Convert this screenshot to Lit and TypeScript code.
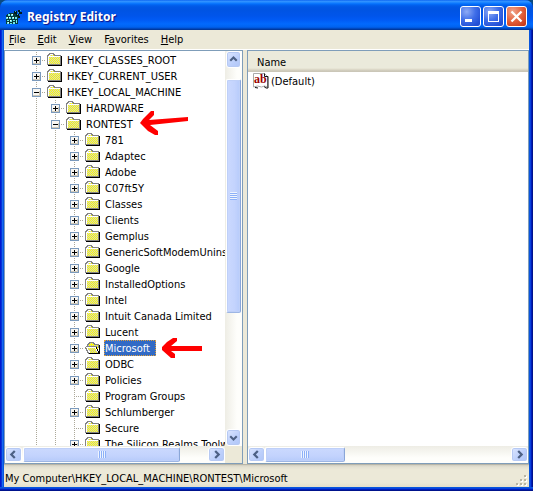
import { LitElement, html, css, svg, nothing } from "lit";
import { customElement, property, state } from "lit/decorators.js";
import { classMap } from "lit/directives/class-map.js";

type Mark = "plus" | "minus" | "";
interface Key { name: string; depth: number; mark: Mark; arrow?: "long" | "short"; }

const key = (name: string, depth: number, mark: Mark = "plus", arrow?: Key["arrow"]): Key => ({ name, depth, mark, arrow });

const KEYS: Key[] = [
  key("HKEY_CLASSES_ROOT", 1),
  key("HKEY_CURRENT_USER", 1),
  key("HKEY_LOCAL_MACHINE", 1, "minus"),
  key("HARDWARE", 2),
  key("RONTEST", 2, "minus", "long"),
  ...["781", "Adaptec", "Adobe", "C07ft5Y", "Classes", "Clients", "Gemplus", "GenericSoftModemUninstall", "Google", "InstalledOptions", "Intel", "Intuit Canada Limited", "Lucent"].map((n) => key(n, 3)),
  key("Microsoft", 3, "plus", "short"),
  key("ODBC", 3),
  key("Policies", 3),
  key("Program Groups", 3, ""),
  key("Schlumberger", 3),
  key("Secure", 3, ""),
  key("The Silicon Realms Toolworks", 3),
];

const CHEVRON = {
  up: "M4 9 8 5 12 9",
  down: "M4 6 8 10 12 6",
  left: "M9 3.5 5 7.5 9 11.5",
  right: "M6 3.5 10 7.5 6 11.5",
};

/** Checkerboard of single-pixel squares over rows given as [y, firstX, lastX]. */
const checker = (rows: number[][]) =>
  rows.map(([y, from, to]) => {
    let d = "";
    for (let x = from; x <= to; x++) if ((x + y) % 2) d += `M${x} ${y}h1v1h-1z`;
    return d;
  }).join("");

const CLOSED_DITHER = checker([[2, 3, 6], ...[4, 5, 6, 7, 8, 9, 10].map((y) => [y, 2, 12])]);
const OPEN_DITHER = checker([[2, 5, 7], [4, 3, 12], [5, 3, 12], [7, 3, 9], [8, 3, 10], [9, 4, 11], [10, 5, 11], [11, 6, 12]]);

@customElement("scroll-bar")
class ScrollBar extends LitElement {
  @property({ type: Boolean, reflect: true }) vertical = false;
  @property({ attribute: false }) parts: number[] = [0, 1, 1];

  static styles = css`
    :host { display: flex; box-sizing: border-box; flex: none; height: 17px; padding: 1px 0; background: linear-gradient(#eeede5, #fefefb 70%); }
    :host([vertical]) { flex-direction: column; height: auto; width: 17px; padding: 0 1px; background: linear-gradient(90deg, #eeede5, #fefefb 70%); }
    button { flex: none; box-sizing: border-box; width: 17px; height: 15px; padding: 0; border: 1px solid #fff; border-radius: 3px; background: linear-gradient(135deg, #dce6ff, #bccffb 60%, #b0c6f8); box-shadow: inset 0 0 0 1px #b6c9f3; }
    :host([vertical]) button { width: 15px; height: 17px; }
    button svg { display: block; width: 100%; height: 100%; }
    .track { flex: 1; display: flex; min-width: 0; min-height: 0; }
    :host([vertical]) .track { flex-direction: column; }
    .thumb { box-sizing: border-box; display: flex; align-items: center; justify-content: center; border: 1px solid #fff; border-right-color: #8aa6d8; border-bottom-color: #9db6e4; border-radius: 2px; background: linear-gradient(#cbd9fe, #c3d3fd 60%, #b6cbfa); box-shadow: inset 0 0 0 1px #bfd0f8; }
    :host([vertical]) .thumb { background: linear-gradient(90deg, #cbd9fe, #c3d3fd 60%, #b6cbfa); }
    .grip { width: 8px; height: 7px; background: repeating-linear-gradient(90deg, #eef4fe 0 1px, #8cb0f8 1px 2px); }
    :host([vertical]) .grip { width: 7px; height: 8px; background: repeating-linear-gradient(#eef4fe 0 1px, #8cb0f8 1px 2px); }
  `;

  private arrow(dir: keyof typeof CHEVRON) {
    return html`<button type="button" aria-label="Scroll ${dir}">
      <svg viewBox="0 0 ${this.vertical ? "16 15" : "15 15"}"><path d=${CHEVRON[dir]} fill="none" stroke="#4d6185" stroke-width="2.6" /></svg>
    </button>`;
  }

  render() {
    const [before, size, after] = this.parts;
    return html`
      ${this.arrow(this.vertical ? "up" : "left")}
      <div class="track">
        <div style="flex:${before} 0 0"></div>
        <div class="thumb" style="flex:${size} 0 0"><div class="grip"></div></div>
        <div style="flex:${after} 0 0"></div>
      </div>
      ${this.arrow(this.vertical ? "down" : "right")}
    `;
  }
}

@customElement("app-root")
class AppRoot extends LitElement {
  @state() private selected = "Microsoft";

  static styles = css`
    :host { display: block; height: 100vh; font: 11px/16px Tahoma, "DejaVu Sans Condensed", "DejaVu Sans", sans-serif; color: #000; background: #0a4a82; }
    button { font: inherit; color: inherit; border: 0; padding: 0; background: none; }
    .window { box-sizing: border-box; height: 100%; display: flex; flex-direction: column; border-radius: 8px 8px 0 0; overflow: hidden; background: linear-gradient(90deg, #0019cf 0 1px, #0831d9 1px 2px, #166aee 2px 3px, #0855dd 3px 4px, #0855dd 4px calc(100% - 4px), #0855dd calc(100% - 4px) calc(100% - 3px), #0842dd calc(100% - 3px) calc(100% - 2px), #001dbb calc(100% - 2px) calc(100% - 1px), #00138c calc(100% - 1px)); }
    .titlebar { flex: none; height: 30px; box-sizing: border-box; display: flex; align-items: center; padding: 3px 6px 0; gap: 5px; background: linear-gradient(#0058ee 0, #3593ff 1px, #288eff 2px, #127dff 3px, #036ffc 4px, #0262ee 5px, #0057e5 7px, #0054e3 10px, #0055eb 16px, #005bf5 20px, #026afe 24px, #0062ef 27px, #0052d6 28px, #0040ab 29px, #003092 30px); }
    .titlebar h1 { flex: 1; margin: 0; padding-top: 1px; font: bold 12px/20px "Trebuchet MS", "Noto Sans", sans-serif; color: #fff; text-shadow: 1px 1px 1px #0f1089; }
    .app-icon { width: 16px; height: 16px; flex: none; }
    .caption { display: flex; gap: 2px; }
    .caption button { box-sizing: border-box; width: 21px; height: 21px; border: 1px solid #fff; border-radius: 3px; background: radial-gradient(circle at 30% 25%, #8fabf5, #3f6ee8 45%, #2350d6 80%, #1e4bd0); }
    .caption .close { background: radial-gradient(circle at 30% 25%, #f0a48c, #e2603b 50%, #c8391a 90%); }
    .caption svg { display: block; width: 19px; height: 19px; }
    .client { flex: 1; min-height: 0; margin: 0 4px; display: flex; flex-direction: column; background: #ece9d8; }
    .frame { flex: none; height: 4px; background: linear-gradient(#0855dd 0 1px, #0842dd 1px 2px, #001dbb 2px 3px, #00138c 3px); }
    .menu { flex: none; display: flex; gap: 8px; padding: 2px 3px 1px; border-bottom: 1px solid #fff; }
    .menu button { padding: 0 2px; }
    .panes { flex: 1; min-height: 0; display: grid; grid-template-columns: 239fr 282fr; column-gap: 4px; }
    .pane { min-width: 0; min-height: 0; display: flex; flex-direction: column; background: #fff; border: 1px solid #7f9db9; }
    .body { flex: 1; min-height: 0; display: flex; align-items: stretch; }
    .with-corner { display: flex; padding-right: 17px; background: #ece9d8; }
    .with-corner scroll-bar { flex: 1; }
    .tree { flex: 1; min-width: 0; margin: 0; padding: 1px 0 0 22px; overflow: hidden; list-style: none; }
    .row { height: 16px; display: flex; align-items: center; white-space: nowrap; }
    .cell { flex: none; width: 19px; height: 16px; display: flex; align-items: center; background: repeating-linear-gradient(#aca899 0 1px, transparent 1px 2px) 9px 0 / 1px 100% no-repeat; }
    .joint { background: repeating-linear-gradient(#aca899 0 1px, transparent 1px 2px) 9px 0 / 1px 100% no-repeat, repeating-linear-gradient(90deg, transparent 0 1px, #aca899 1px 2px) 10px 8px / 10px 1px no-repeat; padding: 1px 0 0 5px; box-sizing: border-box; }
    .toggle { width: 9px; height: 9px; }
    .toggle svg, .folder, .paper, .arrow { display: block; flex: none; }
    .folder { width: 16px; height: 14px; margin: 0 3px 0 1px; }
    .label { box-sizing: border-box; height: 16px; padding: 1px 1px 0; line-height: 16px; }
    .selected .label { padding: 0 5px 0 0; line-height: 16px; background: #316ac5; color: #fff; border: 1px dotted #e0a03c; }
    .arrow { margin-left: 6px; }
    table { width: 100%; border-collapse: collapse; align-self: flex-start; }
    th { text-align: left; font-weight: normal; }
    td { padding: 0; }
    thead tr { background: linear-gradient(#ebeadb 0 17px, #e2decd 18px, #d6d2c2 19px, #cbc7b8 20px, #cbc7b8); }
    thead th { height: 21px; box-sizing: border-box; padding: 2px 9px 0; }
    .value { display: flex; align-items: center; gap: 1px; height: 18px; padding-left: 5px; }
    .value span { padding-top: 1px; }
    .paper { width: 17px; height: 16px; }
    .paper text { font: bold 12px "Liberation Serif", serif; fill: #900; }
    .status { flex: none; height: 23px; box-sizing: border-box; display: flex; justify-content: space-between; align-items: flex-end; padding: 0 1px 0; background: linear-gradient(#9d9b8f 0, #d2cfc0 1px, #e4e1d2 3px, #ece9d8 6px, #ece9d8 80%, #e3dfcc); }
    .status output { line-height: 16px; white-space: nowrap; }
  `;

  private folder(open: boolean) {
    return html`<svg class="folder" viewBox="0 0 16 14" shape-rendering="crispEdges" aria-hidden="true">
      ${open
        ? svg`<path d="M3 6V3h1V2h1V1h3v1h1v1h4v9H6z" fill="#ff0" />
          <path d="M2.5 6V3.500h1v-1h1v-1h4v1h1v1h4V7" fill="none" stroke="#848484" />
          <path d="M0 5h11v2h1v2h1v3H4v-2H3V8H1V6H0z" fill="#fff" />
          <path d="M3 7h7v1h1v2h1v2H5v-2H4V9H3z" fill="#ff0" />
          <path d=${OPEN_DITHER} fill="#c6c6c6" />
          <path d="M0.500 5.500h11M0.500 6v1.500h1v2h1v2h1v1" fill="none" stroke="#848484" />
          <path d="M4 12h10v1H4zM14 4h1v9h-1zM11 6h1v2h1v2h1v2h-1v-2h-1V8h-1z" />`
        : svg`<path d="M1 12V3h1V2h1V1h4v1h1v1h6v9z" fill="#ff0" />
          <path d=${CLOSED_DITHER} fill="#d0d0c8" />
          <path d="M1.500 11V3.500H13M2.500 3V1.500h4" fill="none" stroke="#fff" />
          <path d="M0.500 12V2.500h1v-1h1v-1h4v1h1v1h6V12M0 11.500h14" fill="none" stroke="#848484" />
          <path d="M14.500 3v10M1 12.500h14" fill="none" stroke="#000" />`}
    </svg>`;
  }

  private toggle(k: Key) {
    if (!k.mark) return nothing;
    return html`<button class="toggle" type="button" aria-label="Toggle ${k.name}">
      <svg width="9" height="9" viewBox="0 0 9 9" shape-rendering="crispEdges">
        <rect x="0.5" y="0.5" width="8" height="8" fill="#f8f6f2" stroke="#7b9abd" />
        <path d="M1 7h7v1H1zM7 3h1v5H7z" fill="#cfc8b8" />
        <path d=${k.mark === "plus" ? "M2 4h5v1H2zM4 2h1v5H4z" : "M2 4h5v1H2z"} />
      </svg>
    </button>`;
  }

  private arrow(kind?: Key["arrow"]) {
    if (!kind) return nothing;
    return kind === "long"
      ? html`<svg class="arrow" width="49" height="26" viewBox="0 0 49 26" aria-hidden="true"><path d="M11 0h3v4L9 9l39-3v4L10 14l8 6v4h-3L8 20 0 12 3 8z" fill="#f00" /></svg>`
      : html`<svg class="arrow" width="41" height="20" viewBox="0 0 41 20" aria-hidden="true"><path d="M11 0h4v3L9 8h31v5H9l4 3v4H9L0 12V9L5 4z" fill="#f00" /></svg>`;
  }

  private path() {
    const i = KEYS.findIndex((k) => k.name === this.selected);
    const names: string[] = [];
    let depth = KEYS[i].depth + 1;
    for (let j = i; j >= 0 && depth > 1; j--) {
      if (KEYS[j].depth < depth) { names.unshift(KEYS[j].name); depth = KEYS[j].depth; }
    }
    return ["My Computer", ...names].join("\\");
  }

  private row(k: Key) {
    const selected = k.name === this.selected;
    return html`<li class=${classMap({ row: true, selected })} role="treeitem" aria-level=${k.depth} aria-selected=${selected}>
      ${Array.from({ length: k.depth - 1 }, () => html`<span class="cell"></span>`)}
      <span class="cell joint">${this.toggle(k)}</span>
      ${this.folder(selected)}
      <button class="label" type="button" @click=${() => (this.selected = k.name)}>${k.name}</button>
      ${this.arrow(k.arrow)}
    </li>`;
  }

  render() {
    return html`<div class="window">
      <header class="titlebar">
        <svg class="app-icon" viewBox="0 0 16 16" shape-rendering="crispEdges" aria-hidden="true">
          <path d="M0 6h1V5h2V4h5l3 3 1 1v7H0z" fill="#063c3c" />
          <path d="M2 5h2v2H2zM5 5h2v2H5zM0 8h2v2H0zM3 8h2v2H3zM6 8h2v2H6zM1 11h2v1H1zM4 11h2v2H4zM7 11h2v1H7zM9 8h2v2H9zM1 13h2v2H1zM4 14h2v1H4zM7 13h2v2H7zM10 11h1v3h-1z" fill="#6fe6e6" />
          <path d="M3 8h1v1H3zM6 5h1v1H6zM4 11h1v1H4zM7 8h1v1H7zM1 8h1v1H1zM2 13h1v1H2z" fill="#fff" />
          <path d="M8 2h3v3H8zM12 1h2v2h-2zM13 3h3v2h-3zM10 5h3v2h-3zM12 7h2v2h-2z" fill="#021c1c" />
          <path d="M9 2h1v1H9zM14 1h1v1h-1zM11 5h1v1h-1zM12 3h1v1h-1z" fill="#3fc0c0" />
        </svg>
        <h1>Registry Editor</h1>
        <div class="caption">
          <button type="button" aria-label="Minimize"><svg viewBox="0 0 19 19"><path d="M4 12h7v3H4z" fill="#fff" /></svg></button>
          <button type="button" aria-label="Maximize"><svg viewBox="0 0 19 19"><path d="M4 4h11v11H4zM5 7v7h9V7z" fill="#fff" fill-rule="evenodd" /></svg></button>
          <button class="close" type="button" aria-label="Close"><svg viewBox="0 0 19 19"><path d="M4.500 4.500l10 10M14.500 4.500l-10 10" stroke="#fff" stroke-width="2.300" /></svg></button>
        </div>
      </header>
      <div class="client">
        <nav class="menu">
          <button type="button"><u>F</u>ile</button><button type="button"><u>E</u>dit</button><button type="button"><u>V</u>iew</button><button type="button">F<u>a</u>vorites</button><button type="button"><u>H</u>elp</button>
        </nav>
        <main class="panes">
          <section class="pane">
            <div class="body">
              <ul class="tree" role="tree" aria-label="Registry keys">${KEYS.map((k) => this.row(k))}</ul>
              <scroll-bar vertical .parts=${[11, 233, 116]}></scroll-bar>
            </div>
            <div class="with-corner"><scroll-bar .parts=${[1, 157, 28]}></scroll-bar></div>
          </section>
          <section class="pane">
            <div class="body">
              <table>
                <thead><tr><th>Name</th></tr></thead>
                <tbody><tr><td><div class="value">
                  <svg class="paper" viewBox="0 0 17 16" aria-hidden="true">
                    <path d="M0.500 0.500h11l3 3v10.500l-3-1-3 1-4-1-4 1z" fill="#fff" stroke="#aaa" />
                    <path d="M11.500 0.500v3h3.500v11.500h-2l-2-1.500M2 14.500l3 .500" fill="none" stroke="#111" />
                    <text x="1" y="10">ab</text>
                  </svg>
                  <span>(Default)</span>
                </div></td></tr></tbody>
              </table>
            </div>
            <scroll-bar .parts=${[0, 78, 167]}></scroll-bar>
          </section>
        </main>
        <footer class="status">
          <output>${this.path()}</output>
          <svg width="12" height="12" viewBox="0 0 12 12" aria-hidden="true">
            <path d="M9 1h2v2H9zM5 5h2v2H5zM9 5h2v2H9zM1 9h2v2H1zM5 9h2v2H5zM9 9h2v2H9z" fill="#fff" />
            <path d="M8 0h2v2H8zM4 4h2v2H4zM8 4h2v2H8zM0 8h2v2H0zM4 8h2v2H4zM8 8h2v2H8z" fill="#b8b4a2" />
          </svg>
        </footer>
      </div>
      <div class="frame"></div>
    </div>`;
  }
}
